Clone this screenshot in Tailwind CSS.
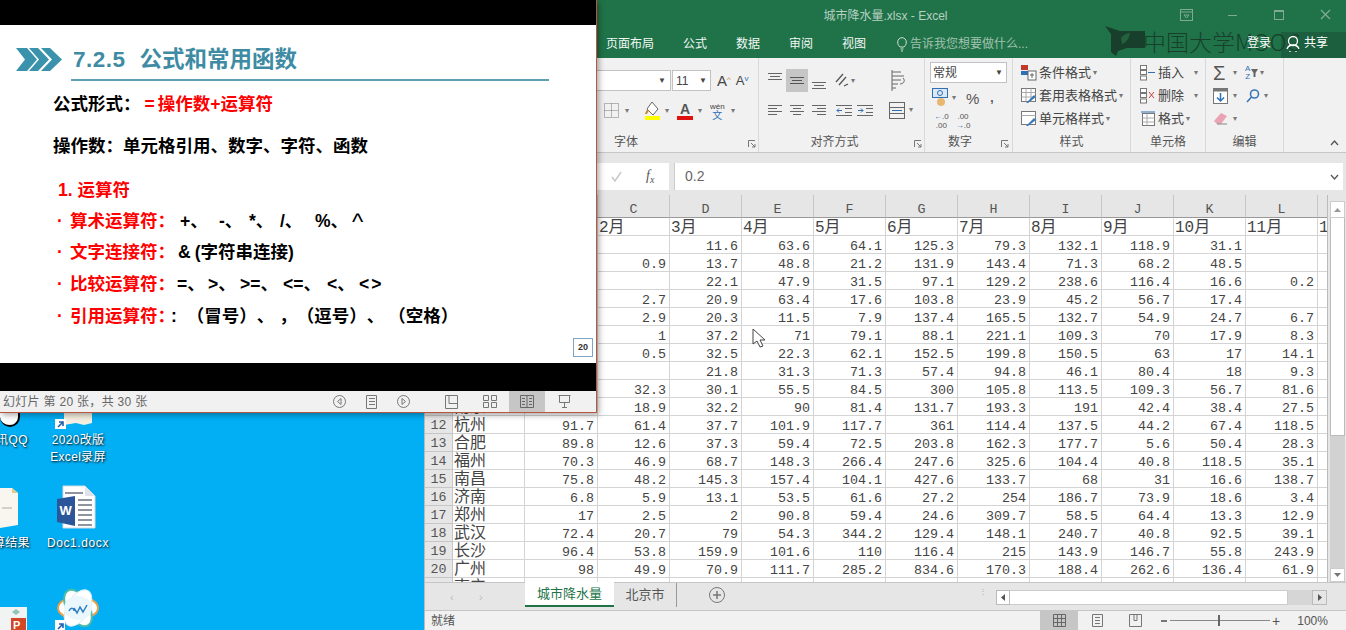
<!DOCTYPE html>
<html lang="zh">
<head>
<meta charset="UTF-8">
<title>城市降水量.xlsx - Excel</title>
<script src="https://cdn.jsdelivr.net/npm/@tailwindcss/browser@4"></script>
</head>
<body class="m-0 overflow-hidden">
<div class="relative w-[1346px] h-[630px] overflow-hidden bg-[#02aef4] font-['Liberation_Sans','Noto_Sans_CJK_SC',sans-serif]">

  <!-- desktop icons -->
  <div class="absolute left-0 top-[413px] w-[20px] h-[14px] bg-white rounded-b-[10px] border-b-2 border-r-2 border-black"></div>
  <div class="absolute left-[-4px] top-[432px] text-[12px] leading-[16px] tracking-[0.5px] text-white [text-shadow:1px_1px_2px_#000]">讯QQ</div>
  <svg class="absolute left-[54px] top-[413px]" width="42" height="16" viewBox="0 0 42 16"><path d="M10 0h28v10l-8 2-8-2-12 2z" fill="#f4efe0"/><rect x="1" y="6" width="11" height="10" fill="#fff"/><path d="M4 14l4-4M5 9h4v4" stroke="#1d5fb0" stroke-width="1.6" fill="none"/></svg>
  <div class="absolute left-[38px] top-[432px] w-[80px] text-center text-[12px] leading-[17px] tracking-[0.3px] text-white [text-shadow:1px_1px_2px_#000]">2020改版<br>Excel录屏</div>
  <svg class="absolute left-0 top-[487px]" width="20" height="42" viewBox="0 0 20 42"><path d="M0 1h12l6 5v32l-18 3z" fill="#f8f6ef"/><path d="M12 1l6 5h-6z" fill="#e6c98f"/><path d="M2 21h10" stroke="#aaa" stroke-width="1"/></svg>
  <div class="absolute left-[-7px] top-[535px] text-[12px] leading-[17px] tracking-[0.3px] text-white [text-shadow:1px_1px_2px_#000]">算结果</div>
  <svg class="absolute left-[56px] top-[485px]" width="41" height="44" viewBox="0 0 41 44"><path d="M7 1h22l10 10v32H7z" fill="#fff" stroke="#d5dbe5"/><path d="M29 1v10h10z" fill="#dfe3ea"/><path d="M22 15h14M22 20h14M22 25h14M22 30h14M22 35h14M22 40h14M9 8h18" stroke="#8f959e" stroke-width="2"/><path d="M1 14l18-3v30L1 37z" fill="#2b579a"/><text x="3.5" y="30" font-size="13" font-weight="700" fill="#fff" font-family="Liberation Sans">W</text></svg>
  <div class="absolute left-[38px] top-[535px] w-[80px] text-center text-[12px] leading-[17px] tracking-[0.6px] text-white [text-shadow:1px_1px_2px_#000]">Doc1.docx</div>
  <svg class="absolute left-0 top-[606px]" width="28" height="24" viewBox="0 0 28 24"><rect x="0" y="1" width="27" height="23" fill="#f2f4f4"/><path d="M12 6l4-3 4 3-4 3z" fill="#8fc5b8"/><rect x="11" y="12" width="15" height="12" fill="#d24726"/><text x="13" y="23" font-size="11" font-weight="700" fill="#fff" font-family="Liberation Sans">P</text></svg>
  <svg class="absolute left-[54px] top-[587px]" width="48" height="43" viewBox="0 0 48 43">
    <ellipse cx="24" cy="21" rx="20" ry="11" fill="#fff" stroke="#e9a04a" stroke-width="2"/>
    <ellipse cx="24" cy="21" rx="20" ry="11" fill="#fff" stroke="#4cbcaa" stroke-width="2" transform="rotate(60 24 21)"/>
    <ellipse cx="24" cy="21" rx="20" ry="11" fill="#fff" stroke="#d8ecf5" stroke-width="1" transform="rotate(120 24 21)"/>
    <ellipse cx="24" cy="21" rx="14" ry="12" fill="#eaf7fd"/>
    <path d="M15 24c2-4 5-3 5 0M20 21l3 5 3-6 3 5 4-7" stroke="#2f7fc1" stroke-width="1.500" fill="none"/>
    <rect x="1" y="33" width="10" height="10" fill="#fff"/><path d="M4 42l4-4M5 37h4v4" stroke="#1d5fb0" stroke-width="1.6" fill="none"/>
  </svg>

  <!-- excel window -->
  <div class="absolute left-[424px] top-0 w-[922px] h-[630px] flex flex-col bg-[#e6e6e6] text-[#444] border-l border-[#bbb]">
    <div class="relative h-[58px] shrink-0 bg-[#207349]">
      <div class="absolute left-[856px] top-[32px] right-0 bottom-0 bg-[#1c5f3e]"></div>
      <div class="h-[30px] pt-[1px] flex items-center justify-center text-[12px] text-[#b6d0c1]">城市降水量.xlsx - Excel</div>
      <div class="relative h-[28px] flex items-center pl-[181px] text-[12px] text-[#f2f7f4]">
        <span class="w-[77px]">页面布局</span><span class="w-[53px]">公式</span><span class="w-[53px]">数据</span><span class="w-[53px]">审阅</span><span class="w-[53px]">视图</span>
        <svg class="ml-[2px]" width="10" height="15" viewBox="0 0 10 15" fill="none" stroke="#cfe0d6"><path d="M3 10C1 8 .7 6.500.7 5a4.300 4.300 0 0 1 8.600 0c0 1.500-.3 3-2.300 5zM3.500 12h3M4 14h2"/></svg>
        <span class="ml-[3px] text-[#a0c2af]">告诉我您想要做什么...</span>
      </div>
      <!-- window controls -->
      <svg class="absolute left-[755px] top-[9px]" width="13" height="12" viewBox="0 0 13 12" fill="none" stroke="#7fab94"><rect x=".5" y=".5" width="12" height="11"/><path d="M.5 3h12M4 6h5l-2.500 3z"/></svg>
      <div class="absolute left-[803px] top-[15px] w-[9px] h-[1px] bg-[#7fab94]"></div>
      <div class="absolute left-[849px] top-[10px] w-[10px] h-[10px] border border-t-2 border-[#7fab94]"></div>
      <svg class="absolute left-[895px] top-[9px]" width="11" height="11" viewBox="0 0 11 11" stroke="#7fab94" stroke-width="1.300"><path d="M1 1l9 9M10 1l-9 9"/></svg>
      <!-- watermark -->
      <svg class="absolute left-[680px] top-[25px]" width="42" height="31" viewBox="0 0 42 31"><path d="M0 1l15 5 8 0h17v17H22l-9 3-2 5-5-4V9z" fill="#173f2c"/><path d="M16 13c3-4 7-5 9-5-1 5-3 9-8 11z" fill="#24613f"/></svg>
      <div class="absolute left-[718px] top-[25px] whitespace-nowrap text-[23px] leading-[32px] text-[#173f2c] font-['Noto_Sans_CJK_SC','Liberation_Sans',sans-serif] font-light">中国大学MOOC</div>
      <span class="absolute left-[822px] top-[35px] text-[12px] leading-[16px] text-white">登录</span>
      <svg class="absolute left-[861px] top-[35px]" width="14" height="18" viewBox="0 0 14 18" fill="none" stroke="#fff" stroke-width="1.300"><circle cx="7" cy="6" r="4.500"/><path d="M1 14c1-3 3-4 6-4s5 1 6 4M4 16v1M10 16v1"/></svg>
      <span class="absolute left-[879px] top-[35px] text-[12px] leading-[16px] text-white">共享</span>
    </div>

    <!-- ribbon -->
    <div class="relative h-[95px] shrink-0 flex pl-[172px] bg-[#f1f1f1] border-b border-[#c6c6c6] text-[12px]">
      <!-- font -->
      <div class="relative w-[162px] flex flex-col border-r border-[#d8d8d8]">
        <div class="mt-[12px] h-[21px] flex items-center">
          <div class="w-[74px] h-[21px] bg-white border border-l-0 border-[#c2c2c2] flex items-center justify-end pr-[4px] text-[8px]">▼</div>
          <div class="ml-[1px] w-[39px] h-[21px] bg-white border border-[#c2c2c2] flex items-center justify-between px-[3px]"><span class="text-[12px]">11</span><span class="text-[8px]">▼</span></div>
          <span class="ml-[6px] text-[15px] leading-none">A<sup class="text-[8px] text-[#c8862b]">^</sup></span>
          <span class="ml-[5px] text-[13px] leading-none">A<sup class="text-[8px] text-[#2f6fb5]">v</sup></span>
        </div>
        <div class="mt-[9px] h-[21px] flex items-center">
          <svg class="ml-[7px]" width="15" height="15" viewBox="0 0 15 15" fill="none" stroke="#777" stroke-dasharray="1 1"><path d="M.5.500h14v14H.5zM.5 7.500h14M7.500.500v14"/></svg>
          <span class="ml-[6px] text-[8px] text-[#777]">▾</span>
          <svg class="ml-[16px]" width="16" height="19" viewBox="0 0 16 19"><path d="M7 1l6 7-5 6-6-6z" fill="#fff" stroke="#666"/><path d="M3 9c-1 2-2 3-2 4" stroke="#c8862b" stroke-width="2"/><rect y="15" width="15" height="4" fill="#ffff00"/></svg>
          <span class="ml-[4px] text-[8px] text-[#777]">▾</span>
          <div class="ml-[8px] w-[16px] flex flex-col items-center"><span class="text-[14px] leading-[14px] font-bold text-[#555]">A</span><div class="w-[16px] h-[4px] bg-[#e01010]"></div></div>
          <span class="ml-[5px] text-[8px] text-[#777]">▾</span>
          <div class="ml-[8px] flex flex-col items-center leading-[9px]"><span class="text-[8px]">wén</span><span class="text-[10px] text-[#2f6fb5]">文</span></div>
          <span class="ml-[6px] text-[8px] text-[#777]">▾</span>
        </div>
        <div class="mt-auto h-[20px] pl-[17px] leading-[20px] text-[#555]">字体</div>
        <svg class="absolute right-[2px] bottom-[4px]" width="8" height="8" viewBox="0 0 8 8" fill="none" stroke="#777"><path d="M.5 7V.5H7M3 3l4 4M4 7h3V4"/></svg>
      </div>
      <!-- alignment -->
      <div class="relative w-[166px] flex flex-col border-r border-[#d8d8d8]">
        <div class="mt-[11px] h-[23px] flex items-stretch pl-[9px]">
          <svg class="w-[14px]" viewBox="0 0 14 23" stroke="#666"><path d="M0 4.500h14M2 7.500h10M0 10.500h14"/></svg>
          <div class="ml-[4px] w-[22px] bg-[#c6c6c6] flex justify-center"><svg width="14" viewBox="0 0 14 23" stroke="#555"><path d="M0 8.500h14M2 11.500h10M0 14.500h14"/></svg></div>
          <svg class="ml-[4px] w-[14px]" viewBox="0 0 14 23" stroke="#666"><path d="M0 13.500h14M2 16.500h10M0 19.500h14"/></svg>
          <svg class="ml-[9px] w-[14px]" viewBox="0 0 14 23" fill="none" stroke="#555"><path d="M1 13l7-8M4 16l7-8M9 17l4-2" stroke-width="1.300"/></svg>
          <span class="ml-[2px] self-center text-[8px] text-[#777]">▾</span>
          <svg class="ml-[36px] w-[16px]" viewBox="0 0 16 23" fill="none" stroke="#666"><path d="M1 3h9M1 7h12M1 11h9M1 15h6M1 19h4M1 1v21M12 9c3 3 0 6-3 6"/></svg>
        </div>
        <div class="mt-[8px] h-[20px] flex items-center pl-[9px]">
          <svg width="14" height="12" viewBox="0 0 14 12" stroke="#666"><path d="M0 1.500h14M0 4.500h9M0 7.500h14M0 10.500h9"/></svg>
          <svg class="ml-[8px]" width="14" height="12" viewBox="0 0 14 12" stroke="#666"><path d="M0 1.500h14M3 4.500h8M0 7.500h14M3 10.500h8"/></svg>
          <svg class="ml-[8px]" width="14" height="12" viewBox="0 0 14 12" stroke="#666"><path d="M0 1.500h14M5 4.500h9M0 7.500h14M5 10.500h9"/></svg>
          <svg class="ml-[10px]" width="16" height="13" viewBox="0 0 16 13" fill="none" stroke="#666"><path d="M0 1.500h16M9 4.500h7M9 8.500h7M0 11.500h16"/><path d="M6 6.500H1m2-2l-2 2 2 2" stroke="#2f6fb5"/></svg>
          <svg class="ml-[5px]" width="16" height="13" viewBox="0 0 16 13" fill="none" stroke="#666"><path d="M0 1.500h16M9 4.500h7M9 8.500h7M0 11.500h16"/><path d="M1 6.500h5m-2-2l2 2-2 2" stroke="#2f6fb5"/></svg>
          <svg class="ml-[16px]" width="16" height="17" viewBox="0 0 16 17" fill="none" stroke="#666"><rect x=".5" y=".5" width="15" height="16"/><path d="M.5 5.500h15M.5 11.500h15"/><path d="M3 8.500h10" stroke="#2f6fb5"/></svg>
          <span class="ml-[4px] text-[8px] text-[#777]">▾</span>
        </div>
        <div class="mt-auto h-[20px] text-center pr-[14px] leading-[20px] text-[#555]">对齐方式</div>
        <svg class="absolute right-[2px] bottom-[4px]" width="8" height="8" viewBox="0 0 8 8" fill="none" stroke="#777"><path d="M.5 7V.5H7M3 3l4 4M4 7h3V4"/></svg>
      </div>
      <!-- number -->
      <div class="relative w-[88px] flex flex-col border-r border-[#d8d8d8]">
        <div class="ml-[5px] mt-[4px] w-[77px] h-[22px] bg-white border border-[#c2c2c2] flex items-center justify-between px-[2px]"><span>常规</span><span class="text-[8px] pr-[1px]">▼</span></div>
        <div class="mt-[3px] h-[24px] flex items-center pl-[7px]">
          <svg width="18" height="20" viewBox="0 0 18 20"><rect x=".5" y=".5" width="15" height="9" fill="#dce9f5" stroke="#2f6fb5"/><circle cx="8" cy="5" r="2.500" fill="none" stroke="#2f6fb5"/><circle cx="9" cy="14" r="4" fill="#e8b870"/></svg>
          <span class="ml-[2px] text-[8px] text-[#777]">▾</span>
          <span class="ml-[10px] text-[15px] leading-none text-[#555]">%</span>
          <span class="ml-[11px] text-[12px] font-bold leading-none text-[#555]">,</span>
        </div>
        <div class="mt-[1px] h-[22px] flex items-center pl-[9px] text-[8px] leading-[9px] text-[#555]">
          <span class="text-center"><span class="text-[#2f6fb5]">←</span>.0<br>.00</span>
          <span class="ml-[7px] text-center">.00<br><span class="text-[#2f6fb5]">→</span>.0</span>
        </div>
        <div class="mt-auto h-[20px] text-center pr-[17px] leading-[20px] text-[#555]">数字</div>
        <svg class="absolute right-[3px] bottom-[4px]" width="8" height="8" viewBox="0 0 8 8" fill="none" stroke="#777"><path d="M.5 7V.5H7M3 3l4 4M4 7h3V4"/></svg>
      </div>
      <!-- styles -->
      <div class="w-[118px] flex flex-col border-r border-[#d8d8d8] pl-[8px]">
        <div class="mt-[3px] h-[23px] flex items-center">
          <svg width="16" height="16" viewBox="0 0 16 16"><rect width="7" height="5" fill="#c0392b"/><rect y="6" width="7" height="4" fill="#2f6fb5"/><rect x="7" y="6" width="8" height="9" fill="#fff" stroke="#666"/><path d="M9 10h4M11 8v5" stroke="#666"/></svg>
          <span class="ml-[2px] text-[13px]">条件格式</span><span class="ml-[2px] text-[8px] text-[#777]">▾</span>
        </div>
        <div class="h-[23px] flex items-center">
          <svg width="16" height="16" viewBox="0 0 16 16"><rect x=".5" y=".5" width="14" height="13" fill="#fff" stroke="#777"/><path d="M.5 4.500h14M5 .5v13M10 .5v13M.5 9h14" stroke="#aaa"/><path d="M5 15l8-8 2 2-8 6z" fill="#3b78b8"/></svg>
          <span class="ml-[2px] text-[13px]">套用表格格式</span><span class="ml-[2px] text-[8px] text-[#777]">▾</span>
        </div>
        <div class="h-[23px] flex items-center">
          <svg width="16" height="16" viewBox="0 0 16 16"><rect x=".5" y=".5" width="14" height="13" fill="#fff" stroke="#777"/><path d="M.5 4.500h14" stroke="#aaa"/><path d="M5 15l8-8 2 2-8 6z" fill="#3b78b8"/></svg>
          <span class="ml-[2px] text-[13px]">单元格样式</span><span class="ml-[2px] text-[8px] text-[#777]">▾</span>
        </div>
        <div class="mt-auto h-[20px] text-center pr-[8px] leading-[20px] text-[#555]">样式</div>
      </div>
      <!-- cells -->
      <div class="w-[75px] flex flex-col border-r border-[#d8d8d8] pl-[9px]">
        <div class="mt-[3px] h-[23px] flex items-center">
          <svg width="16" height="16" viewBox="0 0 16 16" fill="#fff" stroke="#777"><rect x=".5" y=".5" width="6" height="4"/><rect x=".5" y="11" width="6" height="4"/><rect x=".5" y="5.500" width="6" height="4"/><path d="M8 7.500h7" stroke="#2f6fb5"/></svg>
          <span class="ml-[2px] w-[36px] text-[13px]">插入</span><span class="text-[8px] text-[#777]">▾</span>
        </div>
        <div class="h-[23px] flex items-center">
          <svg width="16" height="16" viewBox="0 0 16 16" fill="#fff" stroke="#777"><rect x=".5" y=".5" width="6" height="4"/><rect x=".5" y="11" width="6" height="4"/><rect x=".5" y="5.500" width="6" height="4"/><path d="M9 4l5 6M14 4l-5 6" stroke="#d13c3c"/></svg>
          <span class="ml-[2px] w-[36px] text-[13px]">删除</span><span class="text-[8px] text-[#777]">▾</span>
        </div>
        <div class="h-[23px] flex items-center">
          <svg width="16" height="16" viewBox="0 0 16 16" fill="#fff" stroke="#777"><rect x="2.500" y="2.500" width="12" height="12"/><path d="M2.500 7h12M2.500 11h12M7 2.500v12" stroke="#aaa"/><path d="M1 1h14" stroke="#2f6fb5"/></svg>
          <span class="ml-[2px] text-[13px]">格式</span><span class="ml-[2px] text-[8px] text-[#777]">▾</span>
        </div>
        <div class="mt-auto h-[20px] text-center pr-[9px] leading-[20px] text-[#555]">单元格</div>
      </div>
      <!-- editing -->
      <div class="w-[78px] flex flex-col border-r border-[#d8d8d8] pl-[7px]">
        <div class="mt-[3px] h-[23px] flex items-center">
          <span class="w-[17px] text-[20px] leading-none text-[#555]">Σ</span><span class="ml-[3px] text-[8px] text-[#777]">▾</span>
          <span class="ml-[8px] text-[8px] leading-[8px] text-center text-[#2f6fb5]">A<br>Z</span>
          <svg class="ml-[1px]" width="7" height="8" viewBox="0 0 7 8"><path d="M0 0h7L4.500 4v4h-2V4z" fill="#666"/></svg>
          <span class="ml-[2px] text-[8px] text-[#777]">▾</span>
        </div>
        <div class="h-[23px] flex items-center">
          <svg width="15" height="16" viewBox="0 0 15 16"><rect x=".5" y=".5" width="14" height="15" fill="#fff" stroke="#777"/><rect x=".5" y=".5" width="14" height="3" fill="#777"/><path d="M7.500 5v8M4 9.500l3.500 3.500L11 9.500" stroke="#2f6fb5" stroke-width="1.500" fill="none"/></svg>
          <span class="ml-[5px] text-[8px] text-[#777]">▾</span>
          <svg class="ml-[9px]" width="14" height="14" viewBox="0 0 14 14" fill="none" stroke="#3b78b8" stroke-width="1.600"><circle cx="8.500" cy="5" r="4"/><path d="M5.500 8L1 13"/></svg>
          <span class="ml-[4px] text-[8px] text-[#777]">▾</span>
        </div>
        <div class="h-[23px] flex items-center">
          <svg width="15" height="13" viewBox="0 0 15 13"><path d="M1 9l7-8 6 3-6 8H4z" fill="#e9a3b4"/><path d="M4 12h10" stroke="#888"/></svg>
          <span class="ml-[5px] text-[8px] text-[#777]">▾</span>
        </div>
        <div class="mt-auto h-[20px] text-center pr-[7px] leading-[20px] text-[#555]">编辑</div>
      </div>
      <svg class="absolute right-[7px] bottom-[6px]" width="9" height="6" viewBox="0 0 9 6" fill="none" stroke="#555" stroke-width="1.300"><path d="M1 5l3.500-4L8 5"/></svg>
    </div>

    <!-- formula bar -->
    <div class="h-[42px] shrink-0 flex pt-[10px] pb-[5px] pl-[172px] pr-[3px] gap-[5px]">
      <div class="relative w-[72px] bg-white">
        <svg class="absolute left-[13px] top-[7px]" width="13" height="13" viewBox="0 0 13 13" fill="none" stroke="#c8c8c8" stroke-width="1.500"><path d="M2 7l3 4 6-9"/></svg>
        <span class="absolute left-[49px] top-[4px] font-['Liberation_Serif',serif] italic text-[14px] leading-[18px] text-[#555]">f<sub class="text-[10px]">x</sub></span>
      </div>
      <div class="flex-1 bg-white flex items-center justify-between pl-[10px] pr-[4px] text-[14px] text-[#666] border-l border-[#ccc]">
        <span>0.2</span>
        <svg width="9" height="6" viewBox="0 0 9 6" fill="none" stroke="#555" stroke-width="1.300"><path d="M1 1l3.500 4L8 1"/></svg>
      </div>
    </div>

    <!-- sheet -->
    <div class="relative h-[387px] shrink-0 flex">
      <div class="w-[903px] shrink-0 overflow-hidden bg-white border-r border-[#bbb]">
        <div id="sheet" class="grid grid-cols-[28px_72px_73px_repeat(10,72px)_10px] grid-rows-[23px] auto-rows-[18px]"></div>
      </div>
      <div class="ml-[2px] w-[15px] mt-[6px] flex flex-col bg-[#d2d2d2]">
        <div class="h-[17px] bg-white border border-[#ccc] flex items-center justify-center"><svg width="7" height="4" viewBox="0 0 7 4"><path d="M0 4l3.500-4L7 4z" fill="#999"/></svg></div>
        <div class="h-[218px] bg-white border-x border-b border-[#bbb]"></div>
        <div class="mt-auto h-[14px] bg-white border border-[#ccc] flex items-center justify-center"><svg width="7" height="4" viewBox="0 0 7 4"><path d="M0 0l3.500 4L7 0z" fill="#777"/></svg></div>
      </div>
    </div>

    <!-- tabs -->
    <div class="relative h-[28px] shrink-0 flex items-start pl-[100px] border-t border-[#c6c6c6]">
      <span class="absolute left-[25px] top-[6px] text-[11px] text-[#bbb]">‹</span>
      <span class="absolute left-[54px] top-[6px] text-[11px] text-[#bbb]">›</span>
      <div class="w-[89px] h-[25px] -mt-[1px] bg-white border-b-2 border-[#217346] flex items-center justify-center text-[13px] text-[#217346]">城市降水量</div>
      <div class="w-[63px] h-[24px] border-r border-[#999] flex items-center justify-center text-[13px] text-[#555]">北京市</div>
      <svg class="ml-[32px] mt-[4px]" width="16" height="16" viewBox="0 0 16 16" fill="none" stroke="#777"><circle cx="8" cy="8" r="7.500"/><path d="M8 4v8M4 8h8" stroke-width="1.500"/></svg>
      <div class="absolute left-[554px] top-[7px] text-[8px] leading-[4px] text-[#aaa]">⋮</div>
      <div class="absolute left-[571px] top-[7px] flex h-[15px] w-[331px] bg-[#d6d6d6]">
        <div class="w-[14px] bg-white border border-[#bbb] flex items-center justify-center"><svg width="4" height="7" viewBox="0 0 4 7"><path d="M4 0L0 3.500 4 7z" fill="#555"/></svg></div>
        <div class="w-[278px] bg-white border-y border-r border-[#ccc]"></div>
        <div class="ml-auto w-[15px] bg-[#e6e6e6] border border-[#bbb] flex items-center justify-center"><svg width="4" height="7" viewBox="0 0 4 7"><path d="M0 0l4 3.500L0 7z" fill="#555"/></svg></div>
      </div>
    </div>

    <!-- status bar -->
    <div class="h-[20px] shrink-0 flex items-center bg-[#f1f1f1] border-t border-[#c6c6c6] text-[12px] text-[#555]">
      <span class="ml-[6px]">就绪</span>
      <div class="ml-[585px] w-[38px] h-[20px] bg-[#c6c6c6] flex items-center justify-center"><svg width="13" height="13" viewBox="0 0 13 13" fill="none" stroke="#666"><path d="M.5.500h12v12H.5zM.5 4.500h12M.5 8.500h12M4.500.500v12M8.500.500v12"/></svg></div>
      <svg class="ml-[13px]" width="13" height="13" viewBox="0 0 13 13" fill="none" stroke="#777"><path d="M1.500.500h10v12h-10zM4 3.500h5M4 6.500h5M4 9.500h5"/></svg>
      <svg class="ml-[25px]" width="13" height="13" viewBox="0 0 13 13" fill="none" stroke="#777"><path d="M.5.500h12v12H.5zM5 .5v6h3v-6"/></svg>
      <div class="ml-[19px] w-[6px] h-[2px] bg-[#777]"></div>
      <div class="relative ml-[3px] w-[100px] h-[1px] bg-[#888]"><div class="absolute left-[48px] top-[-5px] w-[2px] h-[11px] bg-[#666]"></div></div>
      <span class="ml-[2px] text-[14px] leading-none">+</span>
      <span class="ml-[17px]">100%</span>
    </div>
  </div>

  <!-- powerpoint window -->
  <div class="absolute left-0 top-0 w-[597px] h-[413px] flex flex-col bg-black border-r border-b border-[#b9563f] shadow-[2px_2px_6px_rgba(0,0,0,0.35)]">
    <div class="h-[25px] shrink-0"></div>
    <div class="relative h-[338px] shrink-0 bg-white">
      <div class="h-[23px] flex items-center relative top-[23px]">
        <svg class="ml-[16px]" width="47" height="23" viewBox="0 0 47 23" fill="#3b92ad"><path d="M0 0h11l10 11.500L11 23H0l9-11.500z"/><path d="M13 0h9l11 11.500L22 23h-9l10-11.500z"/><path d="M25 0h9l12 11.500L34 23h-9l11-11.500z"/></svg>
        <span class="ml-[10px] text-[22.500px] leading-[23px] font-bold tracking-[0.5px] text-[#3e8ba3]">7.2.5</span>
        <span class="ml-[14px] text-[22.500px] leading-[23px] font-bold text-[#3e8ba3]">公式和常用函数</span>
      </div>
      <div class="relative top-[31px] ml-[71px] w-[478px] h-[2px] bg-[#5f9fb2]"></div>
      <div class="relative top-[31px] pl-[53px] text-[17.500px] font-bold text-black [text-spacing-trim:space-all]">
        <div class="mt-[7px] h-[32px] leading-[32px] whitespace-pre">公式形式：<span class="ml-[4px] text-[#f00]">=<span class="ml-[3px]">操作数</span>+运算符</span></div>
        <div class="mt-[10px] h-[32px] leading-[32px]">操作数：单元格引用、数字、字符、函数</div>
        <div class="mt-[12px] h-[32px] leading-[32px] pl-[5px] text-[#f00]">1. 运算符</div>
        <div class="h-[31px] leading-[31px] whitespace-pre"><span class="text-[#f00]"><span class="inline-block w-[17px] pl-[4px]">·</span>算术运算符：</span><span class="ml-[5px] inline-block w-[39px]">+、</span><span class="inline-block w-[30px]">-、</span><span class="inline-block w-[31px]">*、</span><span class="inline-block w-[35px]">/、</span><span class="inline-block w-[37px]">%、</span><span class="inline-block text-[24px] font-normal leading-[0] align-[-3px]">^</span></div>
        <div class="h-[31px] leading-[31px] whitespace-pre"><span class="text-[#f00]"><span class="inline-block w-[17px] pl-[4px]">·</span>文字连接符：</span><span class="ml-[3px] mr-[4px]">&amp;</span>(字符串连接)</div>
        <div class="h-[32px] leading-[32px] whitespace-pre"><span class="text-[#f00]"><span class="inline-block w-[17px] pl-[4px]">·</span>比较运算符：</span><span class="ml-[2px] inline-block w-[31px]">=、</span><span class="inline-block w-[32px]">&gt;、</span><span class="inline-block w-[43px]">&gt;=、</span><span class="inline-block w-[44px]">&lt;=、</span><span class="inline-block w-[32px]">&lt;、</span><span class="inline-block tracking-[2px]">&lt;&gt;</span></div>
        <div class="h-[32px] leading-[32px] whitespace-pre"><span class="text-[#f00]"><span class="inline-block w-[17px] pl-[4px]">·</span>引用运算符：</span><span class="-ml-[4px]">:</span><span class="ml-[10px]">（冒号）、</span><span class="ml-[5px]">，</span>（逗号）、<span class="ml-[4px]">（空格）</span></div>
      </div>
      <div class="absolute left-[573px] top-[313px] w-[20px] h-[19px] border border-[#7fa6c0] flex items-center justify-center text-[9px] font-bold text-[#333]">20</div>
    </div>
    <div class="h-[28px] shrink-0"></div>
    <div class="flex-1 flex items-center bg-[#f1f1f1] text-[12px] text-[#666]">
      <span class="ml-[3px] w-[330px] whitespace-pre tracking-[0.3px]">幻灯片 第 20 张，共 30 张</span>
      <svg width="13" height="13" viewBox="0 0 13 13" fill="none" stroke="#777"><circle cx="6.500" cy="6.500" r="6"/><path d="M8 3.500L4.500 6.500 8 9.500z"/></svg>
      <svg class="ml-[20px]" width="11" height="14" viewBox="0 0 11 14" fill="none" stroke="#777"><path d="M.5.500h10v13H.5zM3 3.500h6M3 6.500h6M3 9.500h6"/></svg>
      <svg class="ml-[20px]" width="13" height="13" viewBox="0 0 13 13" fill="none" stroke="#777"><circle cx="6.500" cy="6.500" r="6"/><path d="M5 3.500l3.500 3L5 9.500z"/></svg>
      <svg class="ml-[35px]" width="13" height="14" viewBox="0 0 13 14" fill="none" stroke="#777"><path d="M.5.500h12v13H.5zM4 .5v8h8"/></svg>
      <svg class="ml-[25px]" width="14" height="13" viewBox="0 0 14 13" fill="none" stroke="#777"><path d="M.5.500h5v5h-5zM8.500.500h5v5h-5zM.5 7.500h5v5h-5zM8.500 7.500h5v5h-5z"/></svg>
      <div class="ml-[12px] w-[36px] h-[21px] bg-[#c6c6c6] flex items-center justify-center"><svg width="14" height="13" viewBox="0 0 14 13" fill="none" stroke="#666"><path d="M.5.500h13v12H.5zM7 .5v12M2 3.500h3M2 6.500h3M2 9.500h3M9 3.500h3M9 6.500h3M9 9.500h3"/></svg></div>
      <svg class="ml-[13px]" width="13" height="13" viewBox="0 0 13 13" fill="none" stroke="#777"><path d="M.5.500h12M1.500.500v7h10v-7M6.500 7.500v5M4 12.500h5"/></svg>
    </div>
  </div>

  <!-- mouse cursor -->
  <svg class="absolute left-[752px] top-[328px]" width="14" height="20" viewBox="0 0 14 20"><path d="M1 1v15l4-3 3 6 3-1-3-6h5z" fill="#fff" stroke="#444"/></svg>
</div>

<script>
  const cols = ['C', 'D', 'E', 'F', 'G', 'H', 'I', 'J', 'K', 'L'];
  const rows = [
    [2, '', '', '', 11.6, 63.6, 64.1, 125.3, 79.3, 132.1, 118.9, 31.1, ''],
    [3, '', '', 0.9, 13.7, 48.8, 21.2, 131.9, 143.4, 71.3, 68.2, 48.5, ''],
    [4, '', '', '', 22.1, 47.9, 31.5, 97.1, 129.2, 238.6, 116.4, 16.6, 0.2],
    [5, '', '', 2.7, 20.9, 63.4, 17.6, 103.8, 23.9, 45.2, 56.7, 17.4, ''],
    [6, '', '', 2.9, 20.3, 11.5, 7.9, 137.4, 165.5, 132.7, 54.9, 24.7, 6.7],
    [7, '', '', 1, 37.2, 71, 79.1, 88.1, 221.1, 109.3, 70, 17.9, 8.3],
    [8, '', '', 0.5, 32.5, 22.3, 62.1, 152.5, 199.8, 150.5, 63, 17, 14.1],
    [9, '', '', '', 21.8, 31.3, 71.3, 57.4, 94.8, 46.1, 80.4, 18, 9.3],
    [10, '', '', 32.3, 30.1, 55.5, 84.5, 300, 105.8, 113.5, 109.3, 56.7, 81.6],
    [11, '南京', '', 18.9, 32.2, 90, 81.4, 131.7, 193.3, 191, 42.4, 38.4, 27.5],
    [12, '杭州', 91.7, 61.4, 37.7, 101.9, 117.7, 361, 114.4, 137.5, 44.2, 67.4, 118.5],
    [13, '合肥', 89.8, 12.6, 37.3, 59.4, 72.5, 203.8, 162.3, 177.7, 5.6, 50.4, 28.3],
    [14, '福州', 70.3, 46.9, 68.7, 148.3, 266.4, 247.6, 325.6, 104.4, 40.8, 118.5, 35.1],
    [15, '南昌', 75.8, 48.2, 145.3, 157.4, 104.1, 427.6, 133.7, 68, 31, 16.6, 138.7],
    [16, '济南', 6.8, 5.9, 13.1, 53.5, 61.6, 27.2, 254, 186.7, 73.9, 18.6, 3.4],
    [17, '郑州', 17, 2.5, 2, 90.8, 59.4, 24.6, 309.7, 58.5, 64.4, 13.3, 12.9],
    [18, '武汉', 72.4, 20.7, 79, 54.3, 344.2, 129.4, 148.1, 240.7, 40.8, 92.5, 39.1],
    [19, '长沙', 96.4, 53.8, 159.9, 101.6, 110, 116.4, 215, 143.9, 146.7, 55.8, 243.9],
    [20, '广州', 98, 49.9, 70.9, 111.7, 285.2, 834.6, 170.3, 188.4, 262.6, 136.4, 61.9],
    [21, '南宁', '', '', '', '', '', '', '', '', '', '', '']
  ];

  const headCell = `h-[23px] pt-[8px] bg-[#e6e6e6] border-r border-b border-r-[#c6c6c6] border-b-[#999] flex items-center justify-center text-[13.330px] font-['Liberation_Mono',monospace] text-[#555]`;
  const numCell = `h-[18px] bg-white border-r border-b border-[#d4d4d4] text-right pr-[3px] text-[13.330px] leading-[21px] font-['Liberation_Mono',monospace] text-[#444] overflow-hidden`;
  const textCell = `h-[18px] bg-white border-r border-b border-[#d4d4d4] pl-[1px] text-[13.330px] leading-[20px] font-['Liberation_Mono','Noto_Sans_CJK_SC',monospace] text-[#444] overflow-hidden whitespace-nowrap`;
  const rowHead = `h-[18px] pt-[3px] bg-[#e6e6e6] border-r border-b border-[#c6c6c6] flex items-center justify-center text-[13.330px] font-['Liberation_Mono',monospace] text-[#555]`;

  let html = '';
  // column header row
  html += `<div class="${headCell}"></div><div class="${headCell}">A</div><div class="${headCell}">B</div>`;
  cols.forEach(c => { html += `<div class="${headCell}">${c}</div>`; });
  html += `<div class="${headCell}"></div>`;
  // first row holds the month titles
  const months = ['', '', '2月', '3月', '4月', '5月', '6月', '7月', '8月', '9月', '10月', '11月', '12月'];
  html += `<div class="${rowHead}">1</div>`;
  months.forEach(m => { html += `<div class="${textCell}"><span class="text-[16px]">${m}</span></div>`; });
  rows.forEach(r => {
    html += `<div class="${rowHead}">${r[0]}</div><div class="${textCell}"><span class="text-[16px]">${r[1]}</span></div>`;
    r.slice(2).forEach(v => { html += `<div class="${numCell}">${v}</div>`; });
    html += `<div class="${numCell}"></div>`;
  });
  document.getElementById('sheet').innerHTML = html;
</script>
</body>
</html>
